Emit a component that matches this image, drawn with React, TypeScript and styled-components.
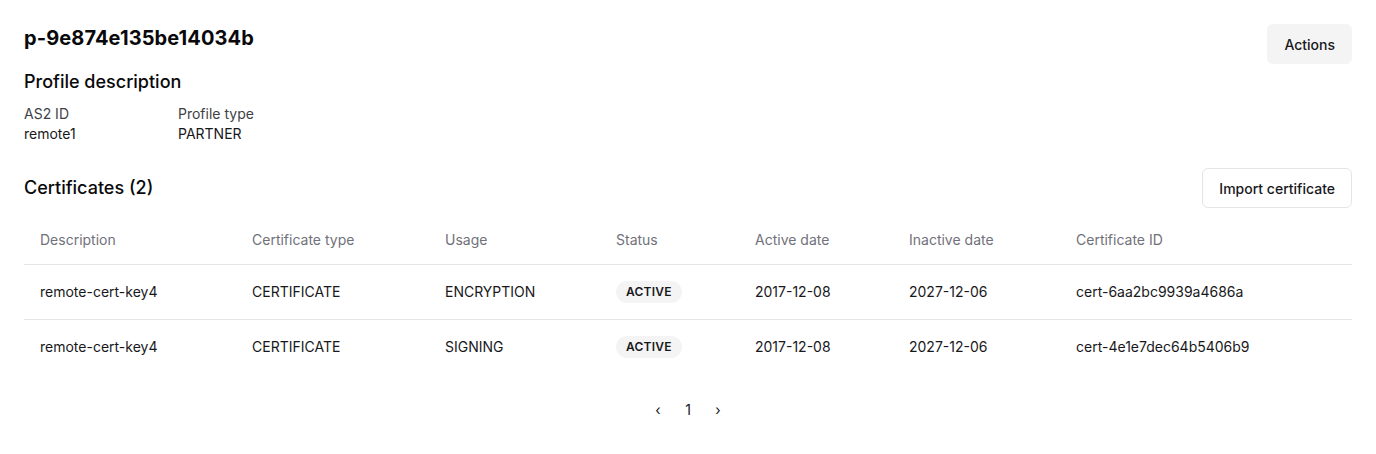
import React from "react";
import styled, { createGlobalStyle } from "styled-components";

const Global = createGlobalStyle`
  html, body { margin: 0; padding: 0; background: #fff; }
  body { font-family: Inter, "Noto Sans", sans-serif; color: #18181b; -webkit-font-smoothing: antialiased; }
  * { box-sizing: border-box; }
`;

const Page = styled.div`
  padding: 24px;
  display: flex;
  flex-direction: column;
`;

const HeaderRow = styled.div`
  display: flex;
  justify-content: space-between;
  align-items: flex-start;
`;

const HeaderLeft = styled.div`
  display: flex;
  flex-direction: column;
`;

const Title = styled.h1`
  margin: 0;
  font-size: 20px;
  line-height: 28px;
  font-weight: 700;
  letter-spacing: 0.1px;
  color: #09090b;
`;

const SectionTitle = styled.h2<{ $mt?: number }>`
  margin: ${(p) => p.$mt ?? 0}px 0 0;
  font-size: 18px;
  line-height: 28px;
  font-weight: 500;
  color: #09090b;
`;

const Button = styled.button<{ $variant: "secondary" | "outline" }>`
  height: 40px;
  padding: 0 16px;
  border-radius: 6px;
  font-family: inherit;
  font-size: 14px;
  font-weight: 500;
  color: #18181b;
  cursor: pointer;
  background: ${(p) => (p.$variant === "secondary" ? "#f4f4f5" : "#ffffff")};
  border: 1px solid ${(p) => (p.$variant === "secondary" ? "#f4f4f5" : "#e4e4e7")};
`;

const Details = styled.div`
  display: flex;
  margin-top: 8px;
`;

const Field = styled.div<{ $w?: number }>`
  display: flex;
  flex-direction: column;
  width: ${(p) => (p.$w ? `${p.$w}px` : "auto")};
  font-size: 14px;
  line-height: 20px;
`;

const FieldLabel = styled.span`
  color: #3f3f46;
`;

const FieldValue = styled.span`
  color: #18181b;
`;

const CertHeader = styled.div`
  display: flex;
  justify-content: space-between;
  align-items: center;
  margin-top: 24px;
`;

const Table = styled.table`
  width: 100%;
  border-collapse: collapse;
  margin-top: 8px;
  font-size: 14px;
  table-layout: fixed;
`;

const Th = styled.th<{ $w: number }>`
  width: ${(p) => p.$w}px;
  height: 48px;
  padding: 0 16px;
  text-align: left;
  font-weight: 400;
  color: #71717a;
  border-bottom: 1px solid #e4e4e7;
`;

const Td = styled.td`
  height: 55px;
  padding: 0 16px;
  color: #18181b;
  border-bottom: 1px solid #e4e4e7;
`;

const LastRow = styled.tr`
  & > td { border-bottom: none; }
`;

const Badge = styled.span`
  display: inline-flex;
  align-items: center;
  height: 22px;
  padding: 0 10px;
  border-radius: 999px;
  background: #f4f4f5;
  font-size: 12px;
  font-weight: 600;
  color: #18181b;
  letter-spacing: 0.25px;
`;

const Pager = styled.nav`
  display: flex;
  justify-content: center;
  align-items: center;
  margin-top: 22px;
  font-size: 14px;
  color: #18181b;
`;

const PageItem = styled.span`
  width: 30px;
  height: 26px;
  display: flex;
  align-items: center;
  justify-content: center;
`;

const columns = [
  { label: "Description", w: 212 },
  { label: "Certificate type", w: 193 },
  { label: "Usage", w: 171 },
  { label: "Status", w: 139 },
  { label: "Active date", w: 154 },
  { label: "Inactive date", w: 167 },
  { label: "Certificate ID", w: 292 },
];

const rows = [
  { desc: "remote-cert-key4", type: "CERTIFICATE", usage: "ENCRYPTION", status: "ACTIVE", active: "2017-12-08", inactive: "2027-12-06", id: "cert-6aa2bc9939a4686a" },
  { desc: "remote-cert-key4", type: "CERTIFICATE", usage: "SIGNING", status: "ACTIVE", active: "2017-12-08", inactive: "2027-12-06", id: "cert-4e1e7dec64b5406b9" },
];

export default function App() {
  return (
    <>
      <Global />
      <Page>
        <HeaderRow>
          <HeaderLeft>
            <Title>p-9e874e135be14034b</Title>
            <SectionTitle $mt={16}>Profile description</SectionTitle>
          </HeaderLeft>
          <Button $variant="secondary">Actions</Button>
        </HeaderRow>
        <Details>
          <Field $w={154}>
            <FieldLabel>AS2 ID</FieldLabel>
            <FieldValue>remote1</FieldValue>
          </Field>
          <Field>
            <FieldLabel>Profile type</FieldLabel>
            <FieldValue>PARTNER</FieldValue>
          </Field>
        </Details>
        <CertHeader>
          <SectionTitle>Certificates (2)</SectionTitle>
          <Button $variant="outline">Import certificate</Button>
        </CertHeader>
        <Table>
          <thead>
            <tr>
              {columns.map((c) => (
                <Th key={c.label} $w={c.w}>{c.label}</Th>
              ))}
            </tr>
          </thead>
          <tbody>
            {rows.map((r, i) => {
              const cells = (
                <>
                  <Td>{r.desc}</Td>
                  <Td>{r.type}</Td>
                  <Td>{r.usage}</Td>
                  <Td><Badge>{r.status}</Badge></Td>
                  <Td>{r.active}</Td>
                  <Td>{r.inactive}</Td>
                  <Td>{r.id}</Td>
                </>
              );
              return i === rows.length - 1 ? <LastRow key={r.id}>{cells}</LastRow> : <tr key={r.id}>{cells}</tr>;
            })}
          </tbody>
        </Table>
        <Pager>
          <PageItem>‹</PageItem>
          <PageItem>1</PageItem>
          <PageItem>›</PageItem>
        </Pager>
      </Page>
    </>
  );
}
